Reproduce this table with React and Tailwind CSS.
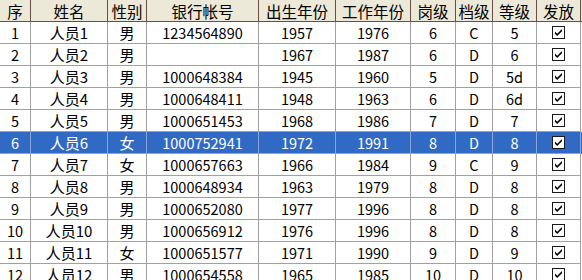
import React from "react";

const rows = [
  ["1", "人员1", "男", "1234564890", "1957", "1976", "6", "C", "5"],
  ["2", "人员2", "男", "", "1967", "1987", "6", "D", "6"],
  ["3", "人员3", "男", "1000648384", "1945", "1960", "5", "D", "5d"],
  ["4", "人员4", "男", "1000648411", "1948", "1963", "6", "D", "6d"],
  ["5", "人员5", "男", "1000651453", "1968", "1986", "7", "D", "7"],
  ["6", "人员6", "女", "1000752941", "1972", "1991", "8", "D", "8"],
  ["7", "人员7", "女", "1000657663", "1966", "1984", "9", "C", "9"],
  ["8", "人员8", "男", "1000648934", "1963", "1979", "8", "D", "8"],
  ["9", "人员9", "男", "1000652080", "1977", "1996", "8", "D", "8"],
  ["10", "人员10", "男", "1000656912", "1976", "1996", "8", "D", "8"],
  ["11", "人员11", "女", "1000651577", "1971", "1990", "9", "D", "9"],
  ["12", "人员12", "男", "1000654558", "1965", "1985", "10", "D", "10"],
];

const headers = ["序", "姓名", "性别", "银行帐号", "出生年份", "工作年份", "岗级", "档级", "等级", "发放"];

const cols = "grid grid-cols-[31px_77px_39px_112px_77px_75px_45px_37px_44px_44px]";

function Check() {
  return (
    <svg width="13" height="13" viewBox="0 0 13 13">
      <rect x="0.5" y="0.5" width="12" height="12" fill="#fff" stroke="#1a1a1a" />
      <path d="M3 5.5 L5.2 7.8 L10 3 L10 5.3 L5.2 10 L3 7.8 Z" fill="#000" />
    </svg>
  );
}

export default function App() {
  return (
    <div
      className="w-[582px] h-[280px] overflow-hidden bg-white text-black"
      style={{ fontFamily: '"Noto Sans CJK SC", "Liberation Sans", sans-serif' }}
    >
      <div className={`${cols} h-[22px] bg-[#ece9d8] border-b border-[#6e4c46]`}>
        {headers.map((h) => (
          <div
            key={h}
            className="border-r border-[#6e4c46] text-[15.5px] leading-[22px] text-center whitespace-nowrap"
          >
            {h}
          </div>
        ))}
      </div>
      {rows.map((r, i) => {
        const sel = i === 5;
        return (
          <div
            key={i}
            className={`${cols} h-[22px] ${sel ? "bg-[#316ac5] text-white" : ""}`}
          >
            {r.map((c, j) => {
              const cjk = j === 1 || j === 2;
              return (
                <div
                  key={j}
                  className={`border-r border-b ${sel ? "border-[#8aa6d8]" : "border-[#a0a0a0]"} text-center pt-[1px] leading-[20px] whitespace-nowrap ${cjk ? "text-[15px]" : "text-[14.5px]"}`}
                >
                  {c}
                </div>
              );
            })}
            <div className={`border-r border-b ${sel ? "border-[#8aa6d8]" : "border-[#a0a0a0]"} flex items-center justify-center`}>
              <Check />
            </div>
          </div>
        );
      })}
    </div>
  );
}
